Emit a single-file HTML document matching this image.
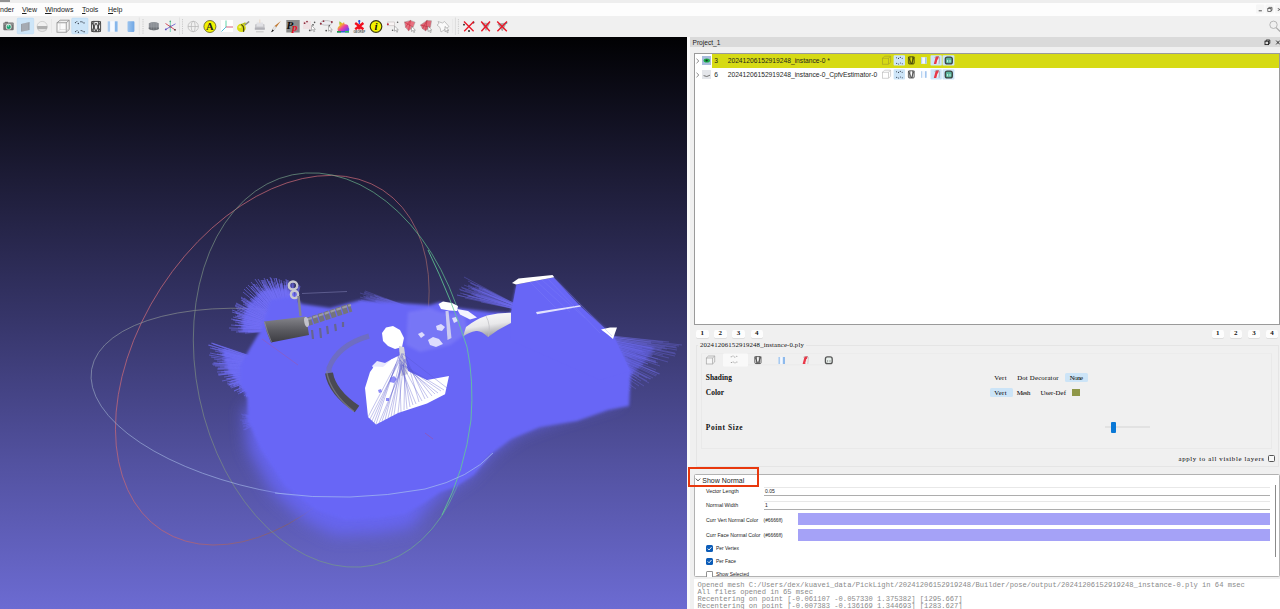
<!DOCTYPE html>
<html><head><meta charset="utf-8"><title>MeshLab</title>
<style>
*{box-sizing:border-box;margin:0;padding:0}
html,body{width:1280px;height:609px;overflow:hidden;background:#f0f0f0;font-family:"Liberation Sans",sans-serif;color:#1a1a1a}
.abs{position:absolute}
#titlestrip{left:0;top:0;width:1280px;height:4px;background:#eeeeee}
#menubar{left:0;top:3.3px;width:1280px;height:13px;background:#fdfdfd}
.menu{position:absolute;top:5px;font-size:7px;line-height:10px;color:#222;white-space:pre}
.menu u{text-decoration-thickness:0.5px;text-underline-offset:0.5px}
#toolbar{left:0;top:16.3px;width:1280px;height:21px;background:#f0f0f0}
#viewport{left:0;top:37.3px;width:686.6px;height:572px;overflow:hidden;background:#000}
#panel{left:687px;top:37px;width:593px;height:572px;background:#f0f0f0}
.t{position:absolute;white-space:pre}
.serif{font-family:"Liberation Serif",serif}
.mono{font-family:"Liberation Mono",monospace}
</style></head>
<body>
<div id="titlestrip" class="abs"></div>
<div class="abs" style="left:0;top:0;width:10px;height:1.5px;background:#555;opacity:.6"></div>
<div id="menubar" class="abs"></div>
<span class="menu" style="left:0px">nder</span>
<span class="menu" style="left:22px"><u>V</u>iew</span>
<span class="menu" style="left:45px"><u>W</u>indows</span>
<span class="menu" style="left:82px"><u>T</u>ools</span>
<span class="menu" style="left:108px"><u>H</u>elp</span>
<div id="toolbar" class="abs"></div>
<svg class="abs" style="left:0;top:16px" width="520" height="21" viewBox="0 16 520 21">
<defs>
<linearGradient id="rb" x1="0" y1="0" x2="1" y2="1"><stop offset="0" stop-color="#28d048"/><stop offset="0.3" stop-color="#f0c020"/><stop offset="0.55" stop-color="#f040a0"/><stop offset="0.8" stop-color="#9040e0"/><stop offset="1" stop-color="#2080f0"/></linearGradient>
<linearGradient id="bc" x1="0" y1="0" x2="1" y2="0"><stop offset="0" stop-color="#9cc4ee"/><stop offset="1" stop-color="#6fa6e4"/></linearGradient>
<g id="cur"><path d="M0 0l0 5.2 1.3-1.1 1 2.2 0.9-0.4-1-2.1 1.7 0z" fill="#fff" stroke="#777" stroke-width="0.5"/></g>
</defs>
<!-- camera -->
<rect x="3.3" y="22.6" width="10.4" height="7.600" rx="1" fill="#707070"/><rect x="5" y="21.800" width="3" height="1.400" fill="#707070"/><rect x="3.3" y="23.400" width="10.400" height="1.200" fill="#a8a8a8" opacity="0.8"/>
<circle cx="8.700" cy="26.700" r="2.900" fill="#dfe9e4"/><circle cx="8.700" cy="26.900" r="2.100" fill="#16a472"/><circle cx="8.300" cy="25.800" r="0.900" fill="#c8f0e0" opacity="0.8"/>
<!-- layers (selected) -->
<rect x="17.2" y="18.1" width="16.5" height="15.7" rx="1" fill="#cde5f8" stroke="#b5d8f5" stroke-width="0.5"/>
<path d="M21 24l8.6-2v8l-8.6 1.8z" fill="#9aa0a8"/><path d="M23 23.5v8M25 23v8M27 22.6v8" stroke="#c0c4ca" stroke-width="0.6"/>
<!-- sphere -->
<circle cx="42.2" cy="26.5" r="5.1" fill="#f0f0f0" stroke="#bcbcbc" stroke-width="0.6"/><path d="M37.2 26h10q0.300 1.600-0.400 3.200h-9.200q-0.700-1.600-0.400-3.200z" fill="#a4a4a4" opacity="0.85"/><path d="M38 30.500q4.200 1.200 8.400 0" stroke="#c8c8c8" stroke-width="0.600" fill="none"/>
<path d="M51.5 19v14" stroke="#e0e0e0" stroke-width="0.6"/>
<!-- cube -->
<g fill="none" stroke="#8a8a8a" stroke-width="0.8"><rect x="57" y="22.8" width="9.2" height="9.4" fill="#fafafa"/><path d="M57 22.8l3-2.6h9.2l-3 2.6M69.2 20.2v9.4l-3 2.6"/><path d="M60 20.200v9.400h9.200M60 29.600l-3 2.600" stroke="#c4c4c4" stroke-width="0.5"/></g>
<!-- points (selected) -->
<rect x="71.7" y="18.1" width="16.3" height="15.700" rx="1" fill="#cde5f8" stroke="#b5d8f5" stroke-width="0.5"/>
<g fill="#3a4450"><circle cx="75.500" cy="22.6" r="0.7"/><circle cx="78.300" cy="23.5" r="0.7"/><circle cx="81" cy="21.8" r="0.700"/><circle cx="84" cy="22.900" r="0.7"/><circle cx="75.6" cy="31.600" r="0.7"/><circle cx="78.4" cy="32.300" r="0.7"/><circle cx="81.2" cy="30.6" r="0.7"/><circle cx="84.100" cy="31.800" r="0.7"/><circle cx="76.9" cy="21.500" r="0.5"/><circle cx="82.6" cy="22" r="0.5"/><circle cx="77" cy="30.5" r="0.5"/><circle cx="82.700" cy="31" r="0.5"/></g>
<!-- wireframe -->
<g fill="none" stroke="#333" stroke-width="0.9"><rect x="91.600" y="21.400" width="9" height="10.300" rx="1.500"/><path d="M91.600 21.400L96 31.500 100.600 21.400M93.800 21.400v10.300M98.400 21.400v10.300M91.600 31.700L96 23 100.600 31.700"/></g>
<!-- hollow cylinder -->
<rect x="107.700" y="21.300" width="9.900" height="10.400" fill="#f6faff"/><rect x="107.700" y="21.300" width="2.400" height="10.400" fill="#a8cbf0"/><rect x="114.800" y="21.300" width="2.800" height="10.400" fill="#86b6ea"/>
<!-- blue cylinder -->
<rect x="127.500" y="21.300" width="6.900" height="10.600" rx="0.800" fill="url(#bc)"/>
<!-- separator -->
<path d="M139.300 17.500v17.500" stroke="#dcdcdc" stroke-width="0.700"/><path d="M143 19v15" stroke="#b8b8b8" stroke-width="0.800" stroke-dasharray="0.800 1"/>
<!-- dark cylinder -->
<path d="M148.800 23.200q5-2.600 10 0v5.800q-5 2.600-10 0z" fill="#8c9096"/><path d="M148.800 27.500h10v1.500q-5 2.600-10 0z" fill="#6c7076"/><path d="M151.300 22.300v7.500M153.800 22v8M156.300 22.300v7.500" stroke="#a4a8ae" stroke-width="0.400"/>
<!-- axes star -->
<path d="M170.300 21v11" stroke="#68d0b0" stroke-width="0.900"/><path d="M165.500 23.500L175 29.800" stroke="#d04050" stroke-width="0.900"/><path d="M175.500 23.800L165.500 29.500" stroke="#7060d0" stroke-width="0.900"/><circle cx="170.300" cy="21.400" r="0.800" fill="#50b080"/><circle cx="175" cy="29.800" r="0.900" fill="#503030"/><circle cx="165.800" cy="29.400" r="0.900" fill="#6050c0"/><circle cx="170.300" cy="26.500" r="1" fill="#806080"/>
<path d="M179.500 17.500v17.500" stroke="#dcdcdc" stroke-width="0.700"/><path d="M182.500 19v15" stroke="#b8b8b8" stroke-width="0.800" stroke-dasharray="0.800 1"/>
<!-- wire sphere -->
<g fill="none" stroke="#b4b4b4" stroke-width="0.700"><circle cx="193.200" cy="26.500" r="5.200"/><ellipse cx="193.200" cy="26.500" rx="2" ry="5.200"/><path d="M188 26.500h10.400"/></g>
<!-- yellow A -->
<circle cx="209.900" cy="26.500" r="6" fill="#f2f200" stroke="#5a5a20" stroke-width="0.800"/>
<text x="209.900" y="30.300" text-anchor="middle" font-family="Liberation Serif,serif" font-weight="bold" font-size="10.500" fill="#222">A</text>
<!-- axes -->
<rect x="221" y="20" width="12" height="12" fill="#fff"/><path d="M226 20.500v6.500" stroke="#50d0a0" stroke-width="0.900"/><path d="M226 27h7" stroke="#d05070" stroke-width="0.900"/><path d="M226 27l-4.500 4.500" stroke="#40b8d8" stroke-width="0.900"/>
<!-- yellow paint -->
<path d="M243 25.500l5.600-4.600 1 1.200-5.600 4.600z" fill="#8a8a8a"/><path d="M241.500 24l3.600-1.800 1 1.300-3 1.800z" fill="#b8c020"/><ellipse cx="241.400" cy="27.900" rx="4.400" ry="4.100" fill="#d8dc10"/><path d="M241 24.500q3.500 1 2.500 7.300" stroke="#4a4a10" stroke-width="1.300" fill="none"/><ellipse cx="240" cy="27" rx="1.500" ry="1.200" fill="#f4f470" opacity="0.800"/>
<!-- grey printer -->
<path d="M255 24.500q5-3 9.600 0v4.500h-9.600z" fill="#c8c8cc"/><rect x="256.600" y="22.500" width="6.400" height="4" fill="#e0e0e4"/><rect x="254.800" y="27.600" width="10" height="2.200" fill="#b0b0b6"/><path d="M256 31.800h7.600" stroke="#aaa" stroke-width="0.600"/><path d="M259.800 19.500v3.500" stroke="#e8d8c8" stroke-width="1"/>
<!-- brush -->
<path d="M280.800 20.900l-4.600 6.300-1.600-1.100z" fill="#c07830"/><path d="M274.600 26.100l1.600 1.100-2.200 3.200-1.800-0.800z" fill="#e8e8e8" stroke="#999" stroke-width="0.300"/><path d="M272.200 29.600l1.800 0.800q-1.400 1.800-3.200 1.800 1.300-1 1.400-2.600z" fill="#222"/>
<!-- Pp -->
<rect x="286.300" y="20" width="13.400" height="12.500" fill="#8c8c8c"/>
<text x="286.600" y="29" font-family="Liberation Serif,serif" font-weight="bold" font-style="italic" font-size="11" fill="#0a0a0a">P</text>
<text x="292" y="30.800" font-family="Liberation Serif,serif" font-weight="bold" font-style="italic" font-size="11" fill="#e81020">p</text>
<!-- select points -->
<rect x="303" y="21" width="8" height="8" fill="#f0d8dc" opacity="0.600"/><g fill="#903040"><circle cx="304.600" cy="23.200" r="0.900"/><circle cx="307" cy="21.600" r="0.900"/></g><g fill="#555"><circle cx="313" cy="24.800" r="0.900"/><circle cx="314.600" cy="22.400" r="0.800"/><circle cx="309.800" cy="30.400" r="0.900"/></g><use href="#cur" x="311.500" y="25.500"/>
<!-- select 2 -->
<ellipse cx="326.300" cy="22.900" rx="5.800" ry="2.300" fill="#ececf0" stroke="#999" stroke-width="0.500"/><g fill="#903040"><circle cx="320.800" cy="23.800" r="1"/><circle cx="323.500" cy="21.200" r="0.900"/><circle cx="331.800" cy="22" r="1"/></g><g fill="#555"><circle cx="329.400" cy="25.800" r="0.800"/><circle cx="326.200" cy="30.600" r="0.900"/></g><use href="#cur" x="328.500" y="26"/>
<!-- rainbow bunny -->
<path d="M339.500 21.200l3.200 2.300 1.300-1.600 0.600 2.300q3.800-0.400 4 3.200 1.200 1.300 0.400 3.600h-11q-1.400-3.300 1.600-5.300-0.800-2.300-0.100-4.500z" fill="url(#rb)"/><rect x="337" y="31" width="12" height="1.500" fill="#3060d0"/><rect x="337" y="31" width="4" height="1.500" fill="#20a040"/><rect x="345" y="31" width="4" height="1.500" fill="#30c060"/>
<!-- red star georef -->
<g stroke="#f01020" stroke-width="2.400" stroke-linecap="butt"><path d="M355.200 23l8.200 6.200M363.400 23l-8.200 6.200M359.300 24.500v5"/></g><path d="M359.300 20.500v3.500" stroke="#2050e0" stroke-width="1.200"/><circle cx="359.300" cy="21.200" r="1.100" fill="#2050e0"/>
<text x="359.300" y="32.600" text-anchor="middle" font-family="Liberation Sans,sans-serif" font-weight="bold" font-size="2.800" fill="#555">GEOREF</text>
<!-- yellow i -->
<circle cx="376" cy="26.500" r="5.800" fill="#f4f400" stroke="#3c3c10" stroke-width="1.200"/>
<text x="376" y="30.200" text-anchor="middle" font-family="Liberation Serif,serif" font-weight="bold" font-style="italic" font-size="11" fill="#111">i</text>
<!-- selection rect -->
<rect x="387.800" y="22" width="6.800" height="3.800" fill="#f8f4f4" stroke="#b8b0b0" stroke-width="0.500"/><circle cx="387.900" cy="24.200" r="1" fill="#c03040"/><g fill="#555"><circle cx="397.600" cy="22.300" r="0.800"/><circle cx="392.600" cy="30.300" r="0.800"/></g><use href="#cur" x="394.500" y="26"/>
<!-- red tri 1 -->
<path d="M404.500 22l6-1.600 4.600 1.800-2 5-4.600 3.600-3-3.500z" fill="#e87080" stroke="#999" stroke-width="0.500"/><path d="M404.500 22l8.600 5.200M410.500 20.400l-5 6.900M408.500 30.800l2-10.400" stroke="#c02030" stroke-width="0.500" fill="none"/><use href="#cur" x="411.500" y="26.300"/>
<!-- red tri 2 -->
<path d="M420.500 25l6.500-4.600 4.500 0.400-1 6.500-5 3.500-3-2z" fill="#e06878" stroke="#999" stroke-width="0.500"/><path d="M420.500 25l9.500 2.300M427 20.400l-4.500 8.400M425.500 30.800l1.500-10.400" stroke="#b82030" stroke-width="0.500" fill="none"/><use href="#cur" x="428" y="26.300"/>
<!-- white polygon -->
<path d="M438 21.500l4.500 1.500 2-1.500 4.500 5-3.500 2.500-4.500 3-1-4.500-3-2.500 2-1.500z" fill="#fafafa" stroke="#a0a0a0" stroke-width="0.600"/><use href="#cur" x="445" y="26.500"/>
<!-- separators -->
<path d="M452.600 19v14" stroke="#e2e2e2" stroke-width="0.600"/><path d="M455.400 17.500v17.500" stroke="#d4d4d4" stroke-width="0.700"/><path d="M458.400 19v15" stroke="#b8b8b8" stroke-width="0.800" stroke-dasharray="0.800 1"/>
<!-- red X 1 -->
<g fill="#222"><circle cx="464" cy="24.700" r="0.900"/><circle cx="473.500" cy="22.500" r="0.900"/><circle cx="469" cy="31" r="1"/></g><path d="M464 21.500l9.600 9.800M473.800 21.500l-9.600 9.800" stroke="#e81828" stroke-width="1.300"/>
<!-- red X 2 -->
<path d="M482 23l7.500 0.500-3.500 7z" fill="#b0b0b0" stroke="#888" stroke-width="0.400"/><path d="M481.200 21.500l8.600 9.800M490 21.500l-8.600 9.800" stroke="#e81828" stroke-width="1.400"/>
<!-- red X 3 -->
<path d="M497.800 24l8.500-1-4 8z" fill="#a8a8a8" stroke="#888" stroke-width="0.400"/><circle cx="506.500" cy="23" r="0.900" fill="#40c0c0"/><path d="M497.200 21.500l9.600 9.800M507 21.500l-9.600 9.800" stroke="#e81828" stroke-width="1.400"/>
</svg>
<!-- top right -->
<svg class="abs" style="left:1250px;top:3px" width="30" height="32" viewBox="1250 3 30 32">
<rect x="1256" y="4.400" width="8.300" height="9" rx="1" fill="#f6f6f6"/><rect x="1265.500" y="4.400" width="8.300" height="9" rx="1" fill="#f6f6f6"/><rect x="1275" y="4.400" width="6" height="9" rx="1" fill="#f6f6f6"/>
<path d="M1258.700 10.800h3.200" stroke="#444" stroke-width="0.900"/>
<g fill="none" stroke="#444" stroke-width="0.700"><rect x="1267.800" y="8.600" width="3.200" height="3"/><path d="M1268.800 8.600v-1.200h3.200v3h-1"/></g>
<path d="M1277.800 8l3 3M1280.800 8l-3 3" stroke="#444" stroke-width="0.700"/>
<circle cx="1273.500" cy="24.800" r="3.700" fill="none" stroke="#a8a8a8" stroke-width="0.800"/><path d="M1276.200 27.600l4 4" stroke="#a8a8a8" stroke-width="1.200"/>
</svg>

<div id="viewport" class="abs">
<svg class="abs" style="left:0;top:0" width="687" height="572" viewBox="0 37 687 572">
<defs>
<linearGradient id="bg" x1="0" y1="37" x2="0" y2="609" gradientUnits="userSpaceOnUse">
<stop offset="0" stop-color="#010103"/><stop offset="0.25" stop-color="#1d1c37"/><stop offset="0.5" stop-color="#37366b"/><stop offset="0.75" stop-color="#5352a1"/><stop offset="1" stop-color="#6c6bd2"/>
</linearGradient>
<linearGradient id="cyl" x1="0" y1="0" x2="0" y2="1"><stop offset="0" stop-color="#86868c"/><stop offset="0.5" stop-color="#5c5c62"/><stop offset="1" stop-color="#3c3c42"/></linearGradient>
<linearGradient id="pipe" x1="0" y1="0" x2="0.3" y2="1"><stop offset="0" stop-color="#ffffff"/><stop offset="0.6" stop-color="#e8e8ea"/><stop offset="1" stop-color="#a4a4aa"/></linearGradient>
<linearGradient id="gr" x1="100" y1="0" x2="440" y2="0" gradientUnits="userSpaceOnUse"><stop offset="0" stop-color="#cc6a78"/><stop offset="0.55" stop-color="#c06472"/><stop offset="1" stop-color="#5c5c58"/></linearGradient>
<linearGradient id="gg" x1="190" y1="0" x2="475" y2="0" gradientUnits="userSpaceOnUse"><stop offset="0" stop-color="#7c8c80"/><stop offset="0.5" stop-color="#74a088"/><stop offset="1" stop-color="#5ecc90"/></linearGradient>
<linearGradient id="gb" x1="0" y1="300" x2="0" y2="500" gradientUnits="userSpaceOnUse"><stop offset="0" stop-color="#84887c"/><stop offset="1" stop-color="#a0b4e8"/></linearGradient>
<filter id="b1" x="-20%" y="-20%" width="140%" height="140%"><feGaussianBlur stdDeviation="0.7"/></filter>
<filter id="b2" x="-20%" y="-20%" width="140%" height="140%"><feGaussianBlur stdDeviation="1.6"/></filter>
<filter id="b4" x="-20%" y="-20%" width="140%" height="140%"><feGaussianBlur stdDeviation="4"/></filter>
<filter id="b9" x="-20%" y="-20%" width="140%" height="140%"><feGaussianBlur stdDeviation="8"/></filter>
</defs>
<rect x="0" y="37" width="687" height="572" fill="url(#bg)"/>
<g fill="none" stroke-width="0.9">
<ellipse cx="272.3" cy="360.2" rx="132.8" ry="202.8" stroke="url(#gr)" opacity="0.75" transform="rotate(33 272.3 360.2)"/>
<ellipse cx="333" cy="370" rx="136.5" ry="199.4" stroke="url(#gg)" opacity="0.7" transform="rotate(-11.8 333 370)"/>
<ellipse cx="294.3" cy="404" rx="205.6" ry="90.6" stroke="url(#gb)" opacity="0.7" transform="rotate(9.7 294.3 404)"/>
</g>
<path filter="url(#b2)" d="M290 330L242 332L242 326L243 321L244 315L246 310L248 305L251 301L255 297L259 293L264 290L269 289L274 288L280 288L285 289L289 291L294 293L297 295Z" fill="#6866f6" opacity="0.8"/>
<path d="M290 330L245 333M290 330L248 332M290 330L239 332M290 330L236 332M290 330L238 331M290 330L248 331M290 330L231 330M290 330L243 330M290 330L229 328M290 330L238 328M290 330L250 328M290 330L241 327M290 330L246 327M290 330L231 325M290 330L235 325M290 330L239 325M290 330L249 325M290 330L244 324M290 330L238 323M290 330L235 322M290 330L241 322M290 330L233 320M290 330L236 320M290 330L231 319M290 330L242 320M290 330L247 321M290 330L233 317M290 330L238 318M290 330L235 316M290 330L237 316M290 330L242 317M290 330L237 315M290 330L239 315M290 330L232 312M290 330L236 313M290 330L235 312M290 330L232 310M290 330L244 313M290 330L237 310M290 330L240 311M290 330L249 314M290 330L236 308M290 330L246 311M290 330L235 306M290 330L242 309M290 330L235 305M290 330L236 304M290 330L243 307M290 330L236 303M290 330L250 309M290 330L248 308M290 330L243 304M290 330L248 306M290 330L245 304M290 330L243 302M290 330L241 300M290 330L242 300M290 330L256 308M290 330L241 298M290 330L241 297M290 330L247 301M290 330L244 298M290 330L256 306M290 330L253 303M290 330L258 306M290 330L254 303M290 330L250 299M290 330L243 292M290 330L255 301M290 330L251 298M290 330L257 301M290 330L244 289M290 330L250 294M290 330L258 301M290 330L255 297M290 330L258 298M290 330L246 287M290 330L258 298M290 330L263 302M290 330L248 285M290 330L251 288M290 330L256 292M290 330L251 286M290 330L252 286M290 330L259 294M290 330L251 282M290 330L253 284M290 330L254 284M290 330L257 287M290 330L266 299M290 330L261 291M290 330L256 284M290 330L260 287M290 330L255 279M290 330L262 288M290 330L264 291M290 330L265 291M290 330L258 279M290 330L263 285M290 330L261 280M290 330L262 282M290 330L262 280M290 330L265 285M290 330L263 280M290 330L264 280M290 330L268 286M290 330L264 278M290 330L271 291M290 330L272 292M290 330L267 279M290 330L267 279M290 330L269 281M290 330L270 283M290 330L277 298M290 330L271 281M290 330L270 277M290 330L271 278M290 330L276 290M290 330L275 288M290 330L274 282M290 330L276 285M290 330L274 278M290 330L277 284M290 330L276 278M290 330L276 278M290 330L278 283M290 330L282 297M290 330L281 291M290 330L279 279M290 330L280 284M290 330L281 283M290 330L281 284M290 330L281 280M290 330L282 283M290 330L284 289M290 330L284 285M290 330L284 281M290 330L285 286M290 330L285 285M290 330L286 282M290 330L286 285M290 330L286 279M290 330L287 280M290 330L288 290M290 330L288 280M290 330L289 294M290 330L289 287M290 330L290 291M290 330L290 284M290 330L291 281M290 330L291 284M290 330L291 295M290 330L293 281M290 330L293 282M290 330L293 288M290 330L294 284M290 330L294 289M290 330L294 291M290 330L294 292M290 330L294 301M290 330L296 290M290 330L296 292M290 330L297 290M290 330L298 284M290 330L299 285M290 330L297 294M290 330L299 287M290 330L297 298M290 330L300 286M290 330L298 296" stroke="#7472f8" stroke-width="0.8" opacity="0.7" fill="none"/>
<path filter="url(#b2)" d="M285 368L254 391L251 391L248 389L246 388L243 386L240 384L238 382L235 379L233 377L231 374L229 371L227 367L226 364L225 360L223 356L223 352L222 348Z" fill="#6866f6" opacity="0.85"/>
<path d="M285 368L248 397M285 368L249 395M285 368L260 387M285 368L252 393M285 368L246 397M285 368L247 396M285 368L246 396M285 368L246 396M285 368L252 391M285 368L244 396M285 368L255 388M285 368L253 390M285 368L254 389M285 368L253 389M285 368L251 390M285 368L250 390M285 368L253 388M285 368L258 385M285 368L258 385M285 368L245 392M285 368L246 391M285 368L253 387M285 368L246 390M285 368L240 393M285 368L244 391M285 368L238 394M285 368L240 393M285 368L242 391M285 368L246 389M285 368L251 386M285 368L239 392M285 368L249 386M285 368L237 392M285 368L239 390M285 368L246 387M285 368L242 389M285 368L242 388M285 368L234 391M285 368L239 388M285 368L234 391M285 368L242 387M285 368L242 387M285 368L239 387M285 368L239 387M285 368L243 385M285 368L240 386M285 368L252 381M285 368L243 384M285 368L237 386M285 368L234 387M285 368L231 388M285 368L240 384M285 368L244 382M285 368L233 386M285 368L230 387M285 368L233 385M285 368L230 386M285 368L234 384M285 368L229 385M285 368L229 385M285 368L228 385M285 368L230 384M285 368L248 379M285 368L236 382M285 368L227 384M285 368L230 382M285 368L229 382M285 368L250 377M285 368L227 382M285 368L231 381M285 368L244 377M285 368L237 379M285 368L236 379M285 368L238 378M285 368L222 381M285 368L232 378M285 368L226 379M285 368L227 379M285 368L242 376M285 368L235 377M285 368L233 376M285 368L246 374M285 368L234 376M285 368L224 377M285 368L233 375M285 368L228 376M285 368L238 374M285 368L235 374M285 368L219 375M285 368L228 374M285 368L218 375M285 368L232 373M285 368L218 374M285 368L224 373M285 368L225 373M285 368L236 371M285 368L225 372M285 368L221 372M285 368L217 372M285 368L242 370M285 368L224 371M285 368L229 370M285 368L228 370M285 368L217 369M285 368L218 369M285 368L235 368M285 368L218 368M285 368L228 368M285 368L225 367M285 368L220 367M285 368L224 367M285 368L238 367M285 368L215 366M285 368L213 365M285 368L228 365M285 368L230 365M285 368L212 364M285 368L214 363M285 368L213 363M285 368L219 363M285 368L237 364M285 368L222 362M285 368L217 361M285 368L236 363M285 368L232 362M285 368L224 361M285 368L214 359M285 368L226 360M285 368L225 360M285 368L222 359M285 368L230 360M285 368L211 357M285 368L227 359M285 368L209 355M285 368L230 358M285 368L233 359M285 368L232 358M285 368L225 356M285 368L210 353M285 368L220 354M285 368L217 354M285 368L222 354M285 368L224 354M285 368L230 355M285 368L215 351M285 368L226 353M285 368L225 353M285 368L219 351M285 368L210 348M285 368L237 355M285 368L212 348M285 368L218 349M285 368L241 355M285 368L208 345M285 368L209 345M285 368L224 349M285 368L228 350M285 368L213 344M285 368L212 343M285 368L211 343" stroke="#7270f6" stroke-width="0.8" opacity="0.7" fill="none"/>
<path d="M262 420L245 430M262 420L244 430M262 420L243 430M262 420L246 427M262 420L246 427M262 420L243 427M262 420L248 425M262 420L243 426M262 420L246 425M262 420L249 423M262 420L244 424M262 420L242 424M262 420L243 423M262 420L245 422M262 420L242 422M262 420L248 421M262 420L242 421M262 420L245 420M262 420L240 420M262 420L248 420M262 420L244 419M262 420L246 418M262 420L242 417M262 420L246 417M262 420L245 416M262 420L246 416M262 420L242 415M262 420L241 414M262 420L246 415M262 420L244 414" stroke="#7070f0" stroke-width="0.6" opacity="0.5" fill="none"/>
<path d="M430 317L356 309M430 317L370 310M430 317L356 308M430 317L385 311M430 317L370 309M430 317L358 307M430 317L356 306M430 317L372 308M430 317L357 306M430 316L387 310M430 316L371 307M430 316L372 307M430 316L392 310M430 316L372 306M430 316L381 307M430 316L377 306M430 316L360 302M430 316L370 304M430 316L368 303M430 316L358 301M430 316L372 303M430 316L388 306M430 316L361 300M430 316L387 305M430 316L385 305M430 316L376 302M430 316L360 297M430 315L375 301M430 315L366 298M430 315L364 297M430 315L376 300M430 315L363 296M430 315L366 296M430 315L389 303M430 315L370 297M430 315L360 293M430 315L377 298M430 315L370 296M430 315L380 298M431 315L364 293M431 315L364 292M431 315L375 296M431 315L374 295M431 315L386 299M431 315L365 291" stroke="#7270f2" stroke-width="0.6" opacity="0.5" fill="none"/>
<path d="M520 310L481 302M520 310L465 298M520 310L457 295M520 310L457 295M520 310L480 300M520 310L467 296M520 310L468 296M520 309L469 296M520 309L463 294M520 309L460 293M520 309L479 298M520 309L473 295M520 309L471 294M520 309L476 296M520 309L475 295M520 309L460 290M520 309L472 293M520 309L459 289M521 309L476 294M521 309L465 290M521 309L481 295M521 309L462 288M521 309L461 287M521 309L474 291M521 308L478 292M521 308L468 288M521 308L472 289M521 308L471 288M521 308L464 285M521 308L482 292M521 308L468 286M521 308L473 288M521 308L478 290M521 308L468 285M521 308L479 289M521 308L475 287M521 308L479 288M521 308L479 288M521 308L470 283M521 308L483 289M521 308L471 283M521 307L484 289M521 307L468 281M521 307L477 285M521 307L464 277" stroke="#7270f2" stroke-width="0.6" opacity="0.55" fill="none"/>
<path d="M611 336L669 342M611 336L663 342M611 337L682 345M611 337L651 342M611 337L651 343M611 337L679 346M610 338L676 347M610 338L677 348M610 338L647 344M610 339L665 347M610 339L677 350M610 339L667 349M610 340L662 349M610 340L652 348M610 340L675 353M610 340L661 350M610 341L676 354M610 341L642 348M610 342L675 356M610 342L634 347M610 342L655 352M610 343L663 355M609 343L642 351M609 343L646 352M609 343L669 358M609 344L643 352M609 344L653 355M609 344L652 356M609 344L645 354M609 345L668 362M609 345L658 359M609 346L629 351M609 346L636 354M609 346L656 361M609 346L646 358M608 347L656 362M608 347L658 363M608 347L650 361M608 347L656 363M608 348L641 359M608 348L660 366M608 348L637 359M608 349L632 357M608 349L648 364M608 349L648 364M607 350L625 356M607 350L628 358M607 350L656 370M607 350L625 358M607 351L643 365M607 351L631 361M607 351L660 374M607 352L655 372M606 352L659 374M606 352L657 375M606 353L630 364M606 353L656 376M606 353L639 368M606 353L629 364M606 354L634 367M605 354L627 365M605 354L653 378M605 354L633 368M605 355L634 370M605 355L628 367M605 355L651 379M605 356L650 379M605 356L647 378M604 356L639 375M604 356L633 372M604 357L639 376M604 357L647 381M604 357L649 383M604 358L633 374M603 358L627 372M603 358L637 378M603 358L641 381M603 359L622 370M603 359L614 366M603 359L625 373M602 359L644 386M602 360L636 381M602 360L606 362M602 360L619 371M602 361L629 378M602 361L639 386M601 361L621 374M601 361L608 366M601 361L625 378M601 362L624 378M601 362L630 383M601 362L618 375M600 363L626 381M600 363L636 389M600 363L614 374M600 363L629 385M600 364L631 388M599 364L617 378M599 364L627 386M599 364L619 380M599 365L621 383M599 365L627 388M598 365L630 391M598 365L622 385M598 365L613 378M598 366L626 390M598 366L621 386M597 366L608 376M597 366L621 387M597 367L621 388" stroke="#7472f4" stroke-width="0.6" opacity="0.55" fill="none"/>
<path filter="url(#b2)" d="M556 330L654 347L653 350L651 353L649 356L647 359L645 361L643 364L641 366L638 368L636 371L634 373L631 375L629 376L626 378L624 380L621 381L619 383Z" fill="#6866f6" opacity="0.5"/>
<path filter="url(#b9)" fill="#6866f6" opacity="0.9" d="M260 400L600 380L620 400L560 418L520 432L492 452L470 476L445 492L428 508L412 528L380 534L335 536L306 522L272 492L248 450L244 410Z"/>
<path filter="url(#b2)" fill="#6866f6" d="M270 300L292 296L302 304L330 308L361 300L400 303L430 305L440 302L458 308L490 312L511 313L516.5 285L553.500 278L580 306L614 337L631 371L629 406L608 410L577 421L540 427L511 439L490 455L474 475L455 487L440 492L424 503L405 514L380 518L345 520L316 510L285 486L260 448L248 420L247 398L240 384L240 366L250 348L262 328Z"/>
<path fill="#6866f6" d="M516.500 284.500L553.500 277.500L580 306L614 337L630 371L600 380L510 340L511 313Z"/>
<path fill="#fff" d="M512 283L518.500 278.500L552.500 275L554.300 277.300L516 284.500Z"/>
<path fill="#eeeeff" opacity="0.9" d="M536 312L580 305.200L581 306.600L537 314.200Z"/>
<path fill="#fff" d="M601 329.500L610 327.500L617 327.500L615 333L613 339L607 334Z"/>
<path d="M553 277L612 336M548 279L600 333M542 280L585 318M536 281L570 312M530 282L556 308" stroke="#8886f6" stroke-width="0.500" opacity="0.55" fill="none"/>
<path filter="url(#b2)" fill="#fff" opacity="0.1" d="M408 312L430 308L440 312L464 314L468 332L450 345L420 352L406 345Z"/>
<path fill="url(#pipe)" d="M463 336.500L466 327Q476 319 487 315.500Q499 312.500 511 312.800L511 323L498 330L488 337Q481 330 476 331Q469 332 463 336.500Z"/>
<path d="M486 316Q491 325 488.500 336.500" stroke="#bcbcc2" stroke-width="0.700" fill="none"/>
<path fill="#fff" d="M438.500 304L443 301.500L452 303L458 306L457 311L449 310.500L441 309Z"/>
<path fill="#fff" opacity="0.92" d="M457 309L468 311L477 317.500L470 319.500L460 314.500Z"/>
<path fill="#e8e8ee" opacity="0.75" d="M445.500 311L448.500 311L451.500 338L447.500 340Z"/>
<path fill="#fff" opacity="0.75" d="M428 340l5-3 6 2 4 5-7 3-6-2zM418 334l4-2 3 3-4 3zM436 326l5-2 4 3-3 4-5-1zM452 318l4-1 2 4-4 2z"/>
<path fill="#fff" d="M365 388L370 372L374 366.500L383 367L392 359L403 353.500L408 371L427 380L449 376L445 394.300L427 403.500L398 413L376 424.500L368 417Z"/>
<path fill="#fff" d="M382 333L386 327.500L393 326L400 330L404 338L402 347L395 349L388 346L383 341Z"/>
<path fill="#d4d4da" d="M399 346L404 347L408 374L401 376Z"/>
<path fill="#fff" opacity="0.85" d="M372 366L377 361L385 363L392 359L396 366L386 372L376 372Z"/>
<path d="M398 360L368 417M400 360L370 419M402 353L372 421M396 364L374 423M399 355L376 424M406 359L379 423M404 359L382 421M402 354L385 420M402 364L388 418M401 362L391 417M403 353L394 415M404 360L398 413M399 352L401 412M405 359L404 410M403 364L407 409M403 365L410 407M400 363L413 405M400 365L416 404M405 353L419 402M397 355L422 401M406 358L425 399M402 356L428 398M401 357L432 396M400 360L435 394M402 365L438 393M403 365L441 391M405 366L444 390M403 354L447 388" stroke="#5856cc" stroke-width="0.450" opacity="0.8" fill="none"/>
<path fill="#6866f6" opacity="0.75" d="M390 378l4-2 3 3-3 4-4-1zM378 390l3-1 1 3-3 1zM386 398l3 0 0 3-3 0z"/>
<path fill="url(#cyl)" d="M264 321.500L306 316.500L309 335L271 342.500Q266 332 264 321.500Z"/>
<path d="M264.500 322Q267 332 271.500 342" stroke="#a0a0a8" stroke-width="0.800" fill="none" opacity="0.7"/>
<path d="M307 322L351 307.500" stroke="#74747c" stroke-width="8.500" stroke-dasharray="5 1.200" fill="none"/>
<path d="M307 319.500L351 305" stroke="#a6a6ae" stroke-width="2" stroke-dasharray="5 1.200" fill="none" opacity="0.8"/>
<path d="M312 330l1 9M320 328l1 10M327 326l1 8M335 324l1 7M343 322l0 5" stroke="#66666e" stroke-width="2.200" fill="none" opacity="0.75"/>
<ellipse cx="306.500" cy="322" rx="2.200" ry="5" fill="#d0d0d8" opacity="0.85" transform="rotate(-12 306.500 322)"/>
<g fill="none" stroke="#c8c8d0" stroke-width="2.400"><ellipse cx="293" cy="285.500" rx="4.200" ry="4"/><ellipse cx="294.500" cy="294.500" rx="3.600" ry="3.600"/></g>
<path d="M298.500 296L300.500 316" stroke="#86868e" stroke-width="2.400" fill="none"/>
<path d="M302 293.500L347 291.500" stroke="#8c8cc0" stroke-width="0.600" fill="none" opacity="0.8"/>
<path d="M369 336Q338 345 329 368Q328 390 356 408" stroke="#74748e" stroke-width="5" fill="none" opacity="0.5"/>
<path d="M329 373Q332 392 357 409" stroke="#4a4a52" stroke-width="8" fill="none"/>
<path d="M326.500 371Q330 393 354 411.500" stroke="#8a8a92" stroke-width="1.400" fill="none" opacity="0.6"/>
<path d="M262 339L298 365" stroke="#c05070" stroke-width="0.500" opacity="0.6"/><path d="M425 433l8 6" stroke="#c04060" stroke-width="0.500" opacity="0.7"/>
<g fill="none" stroke-width="0.9">
<path d="M428 250Q452 300 467 347Q474 380 471 420Q465 470 442 515" stroke="#62cc94" opacity="0.9"/>
<path d="M275 493Q350 503 425 489Q470 478 493 453" stroke="#a4bcee" opacity="0.8"/>
</g>
</svg>
</div>
<div id="panel" class="abs"></div>
<div class="abs" style="left:687.2px;top:37px;width:2.6px;height:572px;background:#fafafa"></div>
<style>
#ptitle{left:690px;top:37.2px;width:590px;height:9.8px;background:#dadada}
#list{left:694px;top:53px;width:586px;height:272px;background:#fff;border:1px solid #9a9a9a}
#row1{left:712px;top:54px;width:567px;height:13.5px;background:#d6da14}
.rowt{font-size:6.7px;line-height:10px;color:#1e1e1e}
.chev{position:absolute;width:3px;height:5px}
.ib{position:absolute;background:#cde4f7;border-radius:1px}
.nb{position:absolute;top:330px;width:12.6px;height:7.6px;background:#fdfdfd;border-radius:1.5px;box-shadow:0 0.5px 0.5px #ccc;font-family:"Liberation Serif",serif;font-weight:bold;font-size:7px;line-height:7.6px;text-align:center;color:#111}
#gbox{left:696px;top:345px;width:583px;height:122px;border:1px solid #e5e5e5}
.lbl{font-family:"Liberation Serif",serif;font-weight:bold;font-size:7.4px;line-height:10px;color:#111}
.opt{font-family:"Liberation Serif",serif;font-size:6.8px;line-height:10px;color:#000}
.sel{position:absolute;background:#cce4f7;border-radius:1.5px}
#tree{left:694px;top:474px;width:586px;height:103px;background:#fff;border:1px solid #b2b2b2;border-radius:1.5px}
.f{font-size:5.3px;line-height:8px;color:#222}
.inp{position:absolute;left:764px;width:506px;height:9px;border-bottom:1px solid #adadad;background:#fff;border-top:0.5px solid #e8e8e8}
.cbar{position:absolute;left:798px;width:472px;background:#a5a2f7}
.cb{position:absolute;left:706px;width:7px;height:7px;border-radius:1.5px;background:#0b5cb8}
#log{left:694px;top:579px;width:586px;height:30px;background:#fff}
.lg{font-family:"Liberation Mono",monospace;font-size:7.13px;line-height:7px;color:#8a8a8a;left:697.5px}
</style>
<div id="ptitle" class="abs"></div>
<span class="t" style="left:692.5px;top:37.6px;font-size:6.6px;line-height:10px;color:#1c1c1c">Project_1</span>
<svg class="abs" style="left:1262px;top:37.7px" width="18" height="9" viewBox="0 0 18 9"><g fill="none" stroke="#222" stroke-width="0.9"><rect x="3" y="3.2" width="3.6" height="3.4"/><path d="M4.2 3.2V2h3.6v3.4H6.6"/><path d="M14.2 2.6l3.6 3.8M17.8 2.6l-3.6 3.8"/></g></svg>
<div id="list" class="abs"></div>
<div id="row1" class="abs"></div>
<!-- row chevrons -->
<svg class="abs" style="left:695px;top:57px" width="6" height="22" viewBox="0 0 6 22"><g fill="none" stroke="#555" stroke-width="0.7"><path d="M1.5 1.8L3.8 4 1.5 6.2"/><path d="M1.5 15.8L3.8 18 1.5 20.2"/></g></svg>
<!-- eye icons -->
<div class="abs" style="left:701.5px;top:56px;width:9.5px;height:9px;background:#a9bcdc"></div>
<svg class="abs" style="left:701.5px;top:56px" width="10" height="9" viewBox="0 0 10 9"><ellipse cx="4.8" cy="4.6" rx="3.2" ry="2" fill="#18b04a"/><ellipse cx="4.6" cy="4.5" rx="1.2" ry="1.1" fill="#153a1f"/></svg>
<div class="abs" style="left:701.5px;top:70px;width:9.5px;height:9px;background:#e4e6ea"></div>
<svg class="abs" style="left:701.5px;top:70px" width="10" height="9" viewBox="0 0 10 9"><path d="M1.6 5.6Q4.8 7.6 8 5.2" fill="none" stroke="#666" stroke-width="0.9"/></svg>
<span class="t rowt" style="left:714.3px;top:56px">3</span>
<span class="t rowt" style="left:727.7px;top:56px">20241206152919248_instance-0 *</span>
<span class="t rowt" style="left:714.3px;top:70px">6</span>
<span class="t rowt" style="left:727.7px;top:70px">20241206152919248_instance-0_CpfvEstimator-0</span>
<svg class="abs" style="left:880px;top:53px" width="80" height="30" viewBox="880 53 80 30"><g fill="none" stroke="#a8a428" stroke-width="0.7"><rect x="882.6" y="58.2" width="6" height="6"/><path d="M882.6 58.2l2-2h6l-2 2M890.6 56.2v6l-2 2"/></g><rect x="893.6" y="55.2" width="11.4" height="10.4" rx="0.8" fill="#cde5f8"/><g fill="#3c4654"><circle cx="896.5" cy="57.8" r="0.55"/><circle cx="898.5" cy="58.4" r="0.55"/><circle cx="900.3" cy="57.4" r="0.55"/><circle cx="902.2" cy="58.2" r="0.55"/><circle cx="896.7" cy="63.4" r="0.55"/><circle cx="898.6" cy="64.0" r="0.55"/><circle cx="900.4" cy="63.0" r="0.55"/><circle cx="902.3" cy="63.7" r="0.55"/></g><g fill="none" stroke="#3a3a08" stroke-width="0.8"><rect x="908.4" y="56.8" width="5.8" height="7.2" rx="1"/><path d="M908.4 56.8l2.9 7.2 2.900-7.200M909.9 56.8v7.2M912.7 56.8v7.2"/></g><rect x="921" y="57.2" width="5.6" height="6.6" fill="#f4f8fe"/><rect x="921" y="57.2" width="1.2" height="6.6" fill="#b8d4f2"/><rect x="925" y="57.2" width="1.600" height="6.600" fill="#a4c6ee"/><rect x="930.5" y="55.2" width="11.3" height="10.4" rx="0.8" fill="#cde5f8"/><path d="M933.8 64.0l2-7.4 3.200-0.400-2.400 7.800z" fill="#e83848"/><path d="M934.500 57.4q3-2 5.200 0l-0.600 6.500" fill="none" stroke="#888" stroke-width="0.500"/><path d="M938 59.4l-1.200 4.400" stroke="#fff" stroke-width="0.800"/><rect x="942.5" y="55.2" width="11.900" height="10.400" rx="0.800" fill="#cde5f8"/><rect x="945.3" y="57.1" width="7" height="6.800" rx="2" fill="#58b49c" stroke="#3c4440" stroke-width="1.300"/><path d="M947.600 59.9v2.400M950 59.9v2.400" stroke="#e8fff4" stroke-width="0.800"/><g fill="none" stroke="#c0c0c0" stroke-width="0.7"><rect x="882.6" y="72.2" width="6" height="6"/><path d="M882.6 72.2l2-2h6l-2 2M890.6 70.2v6l-2 2"/></g><rect x="893.6" y="69.2" width="11.4" height="10.4" rx="0.8" fill="#cde5f8"/><g fill="#3c4654"><circle cx="896.5" cy="71.8" r="0.55"/><circle cx="898.5" cy="72.4" r="0.55"/><circle cx="900.3" cy="71.4" r="0.55"/><circle cx="902.2" cy="72.2" r="0.55"/><circle cx="896.7" cy="77.4" r="0.55"/><circle cx="898.6" cy="78.0" r="0.55"/><circle cx="900.4" cy="77.0" r="0.55"/><circle cx="902.3" cy="77.7" r="0.55"/></g><g fill="none" stroke="#444" stroke-width="0.8"><rect x="908.4" y="70.8" width="5.8" height="7.2" rx="1"/><path d="M908.4 70.8l2.9 7.2 2.900-7.200M909.9 70.8v7.2M912.7 70.8v7.2"/></g><rect x="921" y="71.2" width="5.6" height="6.6" fill="#f4f8fe"/><rect x="921" y="71.2" width="1.2" height="6.6" fill="#b8d4f2"/><rect x="925" y="71.2" width="1.600" height="6.600" fill="#a4c6ee"/><rect x="930.5" y="69.2" width="11.3" height="10.4" rx="0.8" fill="#cde5f8"/><path d="M933.8 78.0l2-7.4 3.200-0.400-2.400 7.800z" fill="#e83848"/><path d="M934.500 71.4q3-2 5.200 0l-0.600 6.500" fill="none" stroke="#888" stroke-width="0.500"/><path d="M938 73.4l-1.200 4.400" stroke="#fff" stroke-width="0.800"/><rect x="942.5" y="69.2" width="11.900" height="10.400" rx="0.800" fill="#cde5f8"/><rect x="945.3" y="71.1" width="7" height="6.800" rx="2" fill="#58b49c" stroke="#3c4440" stroke-width="1.300"/><path d="M947.600 73.9v2.400M950 73.9v2.400" stroke="#e8fff4" stroke-width="0.800"/></svg>
<!-- number buttons -->
<div class="nb" style="left:696px">1</div><div class="nb" style="left:714px">2</div><div class="nb" style="left:732.3px">3</div><div class="nb" style="left:750.5px">4</div>
<div class="nb" style="left:1211.5px">1</div><div class="nb" style="left:1229.5px">2</div><div class="nb" style="left:1247.8px">3</div><div class="nb" style="left:1265.8px">4</div>
<div id="gbox" class="abs"></div><div class="abs" style="left:701px;top:353px;width:571px;height:96px;border:1px solid #e9e9e9;border-top-color:#ececec"></div>
<span class="t serif" style="left:698px;top:340px;font-size:6.8px;line-height:10px;color:#111;background:#f0f0f0;padding:0 2px;letter-spacing:0.14px">20241206152919248_instance-0.ply</span>
<svg class="abs" style="left:700px;top:352px" width="140" height="16" viewBox="700 352 140 16"><rect x="723" y="353.500" width="25" height="13" rx="1" fill="#f9f9f9"/><path d="M748 364.800h84" stroke="#e6e6e6" stroke-width="0.600"/><g fill="none" stroke="#a4a4a4" stroke-width="0.700"><rect x="706.300" y="358" width="6.200" height="6" fill="#f6f6f6"/><path d="M706.300 358l2.200-2h6.200l-2.200 2M714.700 356v6l-2.200 2"/></g><g fill="#777"><circle cx="731.2" cy="356.8" r="0.500"/><circle cx="733" cy="356" r="0.500"/><circle cx="734.8" cy="357" r="0.500"/><circle cx="736.8" cy="356.3" r="0.500"/><circle cx="731.3" cy="362.6" r="0.500"/><circle cx="733.1" cy="361.9" r="0.500"/><circle cx="735" cy="362.8" r="0.500"/><circle cx="736.9" cy="362.1" r="0.500"/></g><g fill="none" stroke="#444" stroke-width="0.800"><rect x="754.800" y="356.600" width="6.200" height="7" rx="1"/><path d="M754.800 356.600l3.100 7 3.100-7M756.400 356.600v7M759.400 356.600v7"/></g><rect x="778.400" y="357" width="6.600" height="7" fill="#f4f8fe"/><rect x="778.400" y="357" width="1.700" height="7" fill="#a8caf0"/><rect x="782.800" y="357" width="2.200" height="7" fill="#8ebaec"/><path d="M802.600 364l2-7.600 3.200-0.400-2.400 8z" fill="#e83848"/><path d="M803 357.400q3-2 5.400 0l-0.600 6.600" fill="none" stroke="#aaa" stroke-width="0.500"/><path d="M806.800 359l-1.200 4.400" stroke="#fff" stroke-width="0.800"/><rect x="825.400" y="356.900" width="6.800" height="6.800" rx="2" fill="#e8f0ec" stroke="#555" stroke-width="1.300"/><path d="M827.600 360v2.400M830 360v2.400" stroke="#888" stroke-width="0.700"/></svg>
<span class="t lbl" style="left:705.8px;top:373px;letter-spacing:0.04px">Shading</span>
<span class="t lbl" style="left:705.8px;top:388px;letter-spacing:0.07px">Color</span>
<span class="t lbl" style="left:705.8px;top:423px;letter-spacing:0.6px">Point Size</span>
<span class="t opt" style="left:994.2px;top:373px;letter-spacing:0.37px">Vert</span>
<span class="t opt" style="left:1017.2px;top:373px;letter-spacing:0.19px">Dot Decorator</span>
<div class="sel" style="left:1064.5px;top:373px;width:23px;height:9px"></div>
<span class="t opt" style="left:1069.8px;top:373px;letter-spacing:-0.48px">None</span>
<div class="sel" style="left:989.5px;top:388px;width:23px;height:9px"></div>
<span class="t opt" style="left:994.2px;top:388px;letter-spacing:0.37px">Vert</span>
<span class="t opt" style="left:1016.8px;top:388px;letter-spacing:-0.5px">Mesh</span>
<span class="t opt" style="left:1040.4px;top:388px;letter-spacing:0.05px">User-Def</span>
<div class="abs" style="left:1071.6px;top:388.5px;width:8.3px;height:7.6px;background:#8f9748"></div>
<div class="abs" style="left:1105px;top:426.2px;width:45px;height:1.4px;background:#e2e2e2"></div>
<div class="abs" style="left:1110.6px;top:421.5px;width:5.6px;height:11.4px;background:#0a78d6;border-radius:1px"></div>
<span class="t serif" style="left:1178.5px;top:453.5px;font-size:6.8px;line-height:10px;color:#000;letter-spacing:0.66px">apply to all visible layers</span>
<div class="abs" style="left:1268px;top:455.3px;width:7px;height:7px;border:0.8px solid #555;border-radius:1.5px;background:#f8f8f8"></div>
<!-- Show Normal tree -->
<div id="tree" class="abs"></div>
<svg class="abs" style="left:695px;top:477px" width="6" height="6" viewBox="0 0 6 6"><path d="M0.8 1.6L3 3.9 5.2 1.6" fill="none" stroke="#333" stroke-width="0.8"/></svg>
<span class="t" style="left:702.3px;top:475.5px;font-size:7px;line-height:10px;color:#1a1a1a">Show Normal</span>
<span class="t f" style="left:706px;top:487.2px">Vector Length</span>
<div class="inp" style="top:486.5px"></div>
<span class="t f" style="left:765px;top:487.2px;font-size:5px">0.05</span>
<span class="t f" style="left:706px;top:501px">Normal Width</span>
<div class="inp" style="top:500.5px"></div>
<span class="t f" style="left:765px;top:501px;font-size:5px">1</span>
<span class="t f" style="left:706px;top:516px;font-size:5.15px">Curr Vert Normal Color</span>
<span class="t f" style="left:763.6px;top:516.5px;font-size:4.8px">(#6666ff)</span>
<div class="cbar" style="top:513.2px;height:11.8px"></div>
<span class="t f" style="left:706px;top:531.3px;font-size:5.15px">Curr Face Normal Color</span>
<span class="t f" style="left:763.6px;top:531.8px;font-size:4.8px">(#6666ff)</span>
<div class="cbar" style="top:529px;height:11.6px"></div>
<div class="cb" style="top:545.4px"></div>
<div class="cb" style="top:558.2px"></div>
<svg class="abs" style="left:706px;top:545.4px" width="7" height="20" viewBox="0 0 7 20"><g fill="none" stroke="#fff" stroke-width="0.9"><path d="M1.7 3.6l1.4 1.4 2.4-2.8"/><path d="M1.7 16.4l1.4 1.4 2.4-2.8"/></g></svg>
<div class="abs" style="left:706px;top:571px;width:7px;height:6px;border:0.8px solid #909090;border-bottom:none;border-radius:1.5px 1.5px 0 0;background:#fff"></div>
<span class="t f" style="left:716px;top:545.3px;font-size:4.95px">Per Vertex</span>
<span class="t f" style="left:716px;top:557.7px;font-size:4.95px">Per Face</span>
<span class="t f" style="left:716px;top:571px;font-size:4.95px">Show Selected</span>
<div class="abs" style="left:1275px;top:484.5px;width:1.2px;height:72px;background:#8a8a8a"></div>
<!-- red annotation -->
<div class="abs" style="left:688px;top:466.8px;width:70.8px;height:20.2px;border:2.6px solid #e8380d"></div>
<!-- log -->
<div id="log" class="abs"></div>
<span class="t lg" style="top:581.6px">Opened mesh C:/Users/dex/kuavei_data/PickLight/20241206152919248/Builder/pose/output/20241206152919248_instance-0.ply in 64 msec</span>
<span class="t lg" style="top:588.5px">All files opened in 65 msec</span>
<span class="t lg" style="top:596.1px">Recentering on point [-0.061107 -0.057330 1.375382] [1295.667]</span>
<span class="t lg" style="top:602.9px">Recentering on point [-0.007383 -0.136169 1.344693] [1283.627]</span>

</body></html>
